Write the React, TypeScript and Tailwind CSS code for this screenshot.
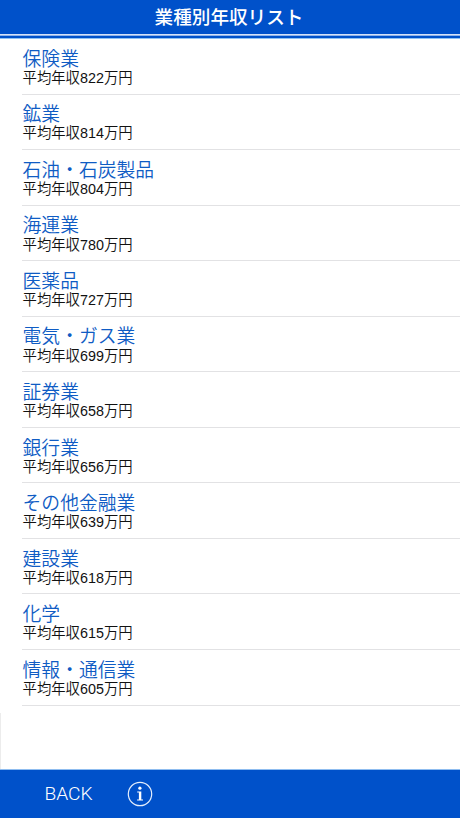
type Industry = {
  name: string;
  income: number;
};

const industries: Industry[] = [
  { name: "保険業", income: 822 },
  { name: "鉱業", income: 814 },
  { name: "石油・石炭製品", income: 804 },
  { name: "海運業", income: 780 },
  { name: "医薬品", income: 727 },
  { name: "電気・ガス業", income: 699 },
  { name: "証券業", income: 658 },
  { name: "銀行業", income: 656 },
  { name: "その他金融業", income: 639 },
  { name: "建設業", income: 618 },
  { name: "化学", income: 615 },
  { name: "情報・通信業", income: 605 },
];

function InfoIcon() {
  return (
    <svg width="26" height="26" viewBox="0 0 26 26" fill="none">
      <circle cx="13" cy="13" r="11.7" stroke="#e6effc" strokeWidth="1.2" />
      <circle cx="12.9" cy="7.2" r="1.6" fill="white" />
      <path d="M10.2 10.6h4.1v8h1.7v1h-5.9v-1h1.8v-7h-1.7z" fill="white" />
    </svg>
  );
}

function IndustryRow({ name, income }: Industry) {
  return (
    <li className="ml-[22px] h-[55.55px] border-b border-[#e2e2e4] pt-[9.7px] pl-[0.6px]">
      <div className="h-[20.2px] text-[18.8px] leading-[22px] font-[350] text-[#0f5cc4]">{name}</div>
      <div className="h-[18px] text-[14.35px] leading-[18px] font-[350] text-[#111]">平均年収{income}万円</div>
    </li>
  );
}

export default function App() {
  return (
    <div className="flex h-[818px] w-[460px] flex-col overflow-hidden bg-white font-['Liberation_Sans','Noto_Sans_CJK_JP',sans-serif]">
      <header className="h-[39px] shrink-0 border-b border-[#8ec2f3] bg-[#0051ca]">
        <h1 className="h-[34px] pr-[2px] text-center text-[18.6px] leading-[35px] font-medium text-white">業種別年収リスト</h1>
        <div className="h-[2px] border-b border-[#8fb4ea] bg-[#d5e2f8]" />
      </header>

      <ul className="shrink-0">
        {industries.map((industry) => (
          <IndustryRow key={industry.name} {...industry} />
        ))}
      </ul>

      {/* Empty rest of the list, with the faint left edge */}
      <div className="mt-[7px] flex-1 border-l border-[#ececec]" />

      <footer className="flex h-[49px] shrink-0 items-center border-t border-[#8fbdf0] bg-[#0051ca] pl-[44.4px] text-white">
        <button className="w-[82.6px] text-left font-[Roboto] text-[19.2px] leading-6 font-[350]">BACK</button>
        <button aria-label="info">
          <InfoIcon />
        </button>
      </footer>
    </div>
  );
}
